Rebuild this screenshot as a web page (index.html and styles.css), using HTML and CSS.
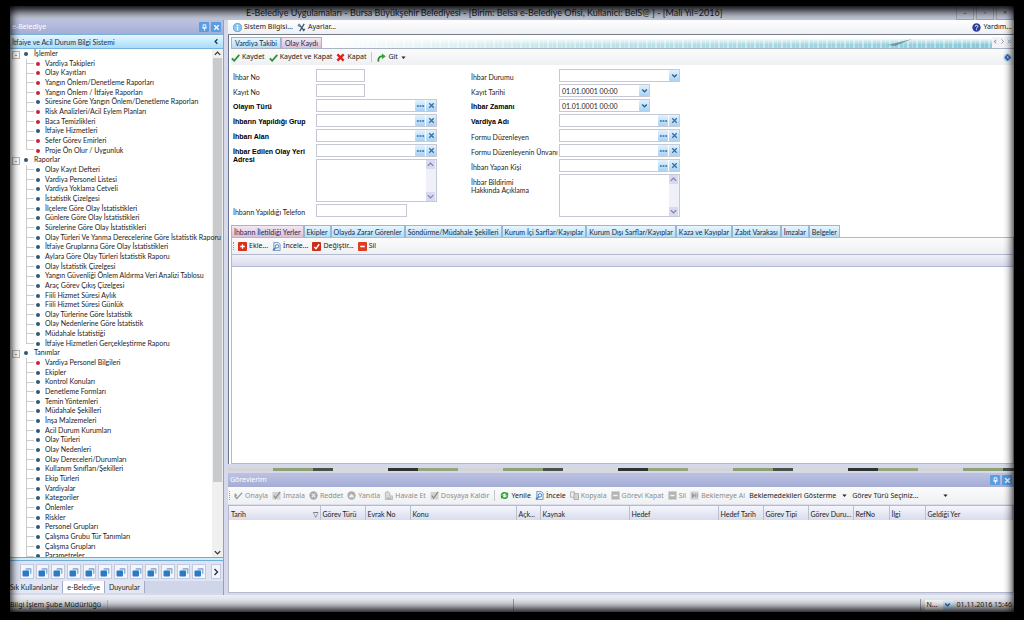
FILE: index.html
```html
<!DOCTYPE html>
<html lang="tr">
<head>
<meta charset="utf-8">
<title>E-Belediye Uygulamaları</title>
<link rel="stylesheet" href="styles.css">
</head>
<body>
<svg class="defs" aria-hidden="true">
  <symbol id="check" viewBox="0 0 10 10"><path d="M1 6l2.500 2.600L9.200 2" fill="none" stroke="#2f9136" stroke-width="2"/></symbol>
  <symbol id="cross" viewBox="0 0 10 10"><path d="M1.500 1.500l7 7M8.500 1.500l-7 7" stroke="#d8231f" stroke-width="2.600"/></symbol>
  <symbol id="go" viewBox="0 0 10 10"><path d="M1.500 9.500C1 5.500 3 3.500 6 3.500" fill="none" stroke="#268a2c" stroke-width="2"/><path d="M5.500 .5L9.800 3.700L5.500 7z" fill="#35a53a"/></symbol>
  <symbol id="info" viewBox="0 0 10 10"><circle cx="5" cy="5" r="4.500" fill="#8cc8ee" stroke="#5a9fd0"/><path d="M5 2v1.300M5 4.200v4" stroke="#fff" stroke-width="1.500"/></symbol>
  <symbol id="tools" viewBox="0 0 10 10"><path d="M2 1l6 8M8 1L3 9M1 2l2 2M6 7h3" stroke="#3f5470" stroke-width="1.400"/><circle cx="2.500" cy="2.500" r="1.500" fill="#7890b0"/></symbol>
  <symbol id="help" viewBox="0 0 10 10"><circle cx="5" cy="5" r="4.600" fill="#2b3b9c"/><path d="M3.500 4c0-2 3-2 3 0c0 1-1.500 1-1.500 2.200M5 7v1" fill="none" stroke="#fff" stroke-width="1.100"/></symbol>
  <symbol id="add" viewBox="0 0 10 10"><rect width="10" height="10" rx="1" fill="#dc3018"/><path d="M5 2.500v5M2.500 5h5" stroke="#fff" stroke-width="1.500"/></symbol>
  <symbol id="edit" viewBox="0 0 10 10"><rect width="10" height="10" rx="1" fill="#cc2e1a"/><path d="M2.500 5.500l2 2L8 2.500" fill="none" stroke="#fff" stroke-width="1.500"/></symbol>
  <symbol id="del" viewBox="0 0 10 10"><rect width="10" height="10" rx="1" fill="#e03a20"/><path d="M2.500 5h5" stroke="#fff" stroke-width="1.700"/></symbol>
  <symbol id="view" viewBox="0 0 10 10"><path d="M2 .5h5l2 2v7H2z" fill="#e4effb" stroke="#6d93c2"/><circle cx="5.500" cy="4.800" r="1.900" fill="#fff" stroke="#3f73b5"/><path d="M4 6.300L1 9.300" stroke="#3f73b5" stroke-width="1.500"/></symbol>
  <symbol id="gcheck" viewBox="0 0 10 10"><path d="M.5 5l2.500 3.500L9 2M1 3l2 2.500" fill="none" stroke="#a0a0a0" stroke-width="1.600"/></symbol>
  <symbol id="gsign" viewBox="0 0 10 10"><rect x=".5" y="1" width="9" height="8.500" fill="#d2d2d2"/><path d="M2 5l2 3L9 1" fill="none" stroke="#8e8e8e" stroke-width="1.400"/></symbol>
  <symbol id="gring" viewBox="0 0 10 10"><circle cx="5" cy="5" r="4.600" fill="#a8a8a8"/><path d="M3 3l4 4M7 3L3 7" stroke="#eee" stroke-width="1.300"/></symbol>
  <symbol id="gwait" viewBox="0 0 10 10"><rect x=".5" y=".5" width="9" height="9" fill="#d2d2d2"/><path d="M2.500 2.500v5l2.500-2.500zM6 3v4M8 3v4" fill="#999" stroke="#999"/></symbol>
  <symbol id="gback" viewBox="0 0 10 10"><circle cx="5" cy="5" r="4.600" fill="#adadad"/><path d="M2.500 5.500L5 3l2.500 2.500v1.800h-5z" fill="#eee"/></symbol>
  <symbol id="gdoc" viewBox="0 0 10 10"><path d="M1.500 9.500V1.500l3-1l2 2v3h3v4z" fill="#d8d8d8" stroke="#b8b8b8"/><path d="M3 8h5" stroke="#999"/></symbol>
  <symbol id="gcopy" viewBox="0 0 10 10"><path d="M.5 1h4.500v6H.5z" fill="#eee" stroke="#aaa"/><path d="M4.500 3h5v6.500h-5z" fill="#e2e2e2" stroke="#a2a2a2"/><path d="M5.500 5.500h3M5.500 7.500h3" stroke="#aaa" stroke-width=".7"/></symbol>
  <symbol id="gbox" viewBox="0 0 10 10"><rect x=".5" y=".5" width="9" height="9" fill="#b4b4b4"/><path d="M2.500 5h5" stroke="#f2f2f2" stroke-width="1.600"/></symbol>
  <symbol id="refresh" viewBox="0 0 10 10"><path d="M1.500 5a3.500 3.500 0 0 1 6-2M8.500 5a3.500 3.500 0 0 1-6 2" fill="none" stroke="#2fa53a" stroke-width="1.800"/><path d="M9 1v4H5.500zM1 9V5h3.500z" fill="#2c9a36"/></symbol>
  <symbol id="cubes" viewBox="0 0 10 10"><rect x="3.500" y="1" width="6" height="6" rx="1" fill="#8db6e0"/><path d="M3 3.200h4.500v4.600" fill="none" stroke="#fff" stroke-width=".8"/><rect x=".5" y="3.500" width="6.500" height="6" rx="1" fill="#2e7ac2"/></symbol>
  <symbol id="pin" viewBox="0 0 10 10"><path d="M3.500 2h3v3.500h-3zM2.500 5.500h5M5 5.500v3" fill="none" stroke="#fff"/></symbol>
  <symbol id="close" viewBox="0 0 10 10"><path d="M2.500 2.500l5 5M7.500 2.500l-5 5" stroke="#fff" stroke-width="1.400"/></symbol>
  <symbol id="x" viewBox="0 0 10 10"><path d="M2.500 2.500l5 5M7.500 2.500l-5 5" stroke="#2f6aa5" stroke-width="1.300"/></symbol>
  <symbol id="dots" viewBox="0 0 10 10"><path d="M1 5.500h2M4 5.500h2M7 5.500h2" stroke="#2f6aa5" stroke-width="1.500"/></symbol>
  <symbol id="down" viewBox="0 0 10 10"><path d="M2.500 3.800L5 6.500l2.500-2.700" fill="none" stroke="#235b93" stroke-width="1.500"/></symbol>
  <symbol id="cup" viewBox="0 0 10 10"><path d="M2 6.500L5 3.500l3 3" fill="none" stroke="currentColor" stroke-width="1.400"/></symbol>
  <symbol id="cdown" viewBox="0 0 10 10"><path d="M2 3.500L5 6.500l3-3" fill="none" stroke="currentColor" stroke-width="1.400"/></symbol>
  <symbol id="cleft" viewBox="0 0 10 10"><path d="M6 2.500L3.500 5l2.500 2.500" fill="none" stroke="#123a66" stroke-width="1.500"/></symbol>
  <symbol id="cright" viewBox="0 0 10 10"><path d="M3.500 2l3 3l-3 3" fill="none" stroke="#28324c" stroke-width="1.400"/></symbol>
  <symbol id="caret" viewBox="0 0 10 10"><path d="M2 3.500h6L5 7z" fill="#222"/></symbol>
  <symbol id="gem" viewBox="0 0 10 10"><circle cx="5" cy="5" r="4.500" fill="#b9d6f2"/><path d="M5 1L9 5L5 9L1.500 5z" fill="#2b63b4"/><path d="M4 4h2v3z" fill="#e8f3ff"/></symbol>
</svg>

<div class="app">
  <header class="titlebar">
    <h1>E-Belediye Uygulamaları - Bursa Büyükşehir Belediyesi - [Birim: Belsa e-Belediye Ofisi, Kullanici: BelS@ ] - [Mali Yıl=2016]</h1>
    <div class="winbtns"><button aria-label="Küçült">–</button><button aria-label="Büyüt">▫</button><button aria-label="Kapat">×</button></div>
  </header>

  <div class="work">
    <aside class="side">
      <div class="cap"><span>e-Belediye</span><button class="capbtn" aria-label="Sabitle"><svg><use href="#pin"/></svg></button><button class="capbtn" aria-label="Kapat"><svg><use href="#close"/></svg></button></div>
      <div class="group"><span>İtfaiye ve Acil Durum Bilgi Sistemi</span><button aria-label="Daralt"><svg><use href="#cleft"/></svg></button></div>
      <div class="treebox">
        <ul class="tree">
          <li class="root">İşlemler</li>
          <li class="red">Vardiya Takipleri</li>
          <li class="red">Olay Kayıtları</li>
          <li class="red">Yangın Önlem/Denetleme Raporları</li>
          <li class="red">Yangın Önlem / İtfaiye Raporları</li>
          <li>Süresine Göre Yangın Önlem/Denetleme Raporları</li>
          <li class="red">Risk Analizleri/Acil Eylem Planları</li>
          <li class="red">Baca Temizlikleri</li>
          <li>İtfaiye Hizmetleri</li>
          <li class="red">Sefer Görev Emirleri</li>
          <li class="red last">Proje Ön Olur / Uygunluk</li>
          <li class="root">Raporlar</li>
          <li>Olay Kayıt Defteri</li>
          <li>Vardiya Personel Listesi</li>
          <li>Vardiya Yoklama Cetveli</li>
          <li>İstatistik Çizelgesi</li>
          <li>İlçelere Göre Olay İstatistikleri</li>
          <li>Günlere Göre Olay İstatistikleri</li>
          <li>Sürelerine Göre Olay İstatistikleri</li>
          <li>Olay Türleri Ve Yanma Derecelerine Göre İstatistik Raporu</li>
          <li>İtfaiye Gruplarına Göre Olay İstatistikleri</li>
          <li>Aylara Göre Olay Türleri İstatistik Raporu</li>
          <li>Olay İstatistik Çizelgesi</li>
          <li>Yangın Güvenliği Önlem Aldırma Veri Analizi Tablosu</li>
          <li>Araç Görev Çıkış Çizelgesi</li>
          <li>Fiili Hizmet Süresi Aylık</li>
          <li>Fiili Hizmet Süresi Günlük</li>
          <li>Olay Türlerine Göre İstatistik</li>
          <li>Olay Nedenlerine Göre İstatistik</li>
          <li>Müdahale İstatistiği</li>
          <li class="last">İtfaiye Hizmetleri Gerçekleştirme Raporu</li>
          <li class="root">Tanımlar</li>
          <li class="red">Vardiya Personel Bilgileri</li>
          <li>Ekipler</li>
          <li>Kontrol Konuları</li>
          <li>Denetleme Formları</li>
          <li>Temin Yöntemleri</li>
          <li>Müdahale Şekilleri</li>
          <li>İnşa Malzemeleri</li>
          <li>Acil Durum Kurumları</li>
          <li>Olay Türleri</li>
          <li>Olay Nedenleri</li>
          <li>Olay Dereceleri/Durumları</li>
          <li>Kullanım Sınıfları/Şekilleri</li>
          <li>Ekip Türleri</li>
          <li>Vardiyalar</li>
          <li>Kategoriler</li>
          <li>Önlemler</li>
          <li>Riskler</li>
          <li>Personel Grupları</li>
          <li>Çalışma Grubu Tür Tanımları</li>
          <li>Çalışma Grupları</li>
          <li>Parametreler</li>
        </ul>
        <div class="scroll"><svg><use href="#cup"/></svg><i class="thumb"></i><i class="rest"></i><svg><use href="#cdown"/></svg></div>
      </div>
      <div class="split"></div>
      <div class="quick">
        <button aria-label="Modül 1"><svg><use href="#cubes"/></svg></button><button aria-label="Modül 2"><svg><use href="#cubes"/></svg></button><button aria-label="Modül 3"><svg><use href="#cubes"/></svg></button><button aria-label="Modül 4"><svg><use href="#cubes"/></svg></button><button aria-label="Modül 5"><svg><use href="#cubes"/></svg></button><button aria-label="Modül 6"><svg><use href="#cubes"/></svg></button><button aria-label="Modül 7"><svg><use href="#cubes"/></svg></button><button aria-label="Modül 8"><svg><use href="#cubes"/></svg></button><button aria-label="Modül 9"><svg><use href="#cubes"/></svg></button><button aria-label="Modül 10"><svg><use href="#cubes"/></svg></button><button aria-label="Modül 11"><svg><use href="#cubes"/></svg></button><button aria-label="Modül 12"><svg><use href="#cubes"/></svg></button><button class="more" aria-label="Diğer"><svg><use href="#cright"/></svg></button>
      </div>
      <nav class="sidetabs"><button>Sık Kullanılanlar</button><button class="on">e-Belediye</button><button>Duyurular</button></nav>
    </aside>

    <main class="main">
      <div class="menubar"><button><svg><use href="#info"/></svg>Sistem Bilgisi...</button><button><svg><use href="#tools"/></svg>Ayarlar...</button><button class="end"><svg><use href="#help"/></svg>Yardım...</button></div>
      <section class="doc">
        <nav class="doctabs"><button>Vardiya Takibi</button><button class="on">Olay Kaydı</button><div class="skyline"><svg viewBox="0 0 24 10" aria-hidden="true"><path d="M0 8l24-6l-17 7z" fill="#71979b"/></svg></div><span class="tabnav"><svg><use href="#cleft"/></svg><svg><use href="#cright"/></svg><svg><use href="#x"/></svg></span></nav>
        <div class="bar"><button><svg><use href="#check"/></svg>Kaydet</button><button><svg><use href="#check"/></svg>Kaydet ve Kapat</button><button><svg><use href="#cross"/></svg>Kapat</button><i class="sep"></i><button><svg><use href="#go"/></svg>Git<svg class="caret"><use href="#caret"/></svg></button><button class="end" aria-label="Görünüm"><svg><use href="#gem"/></svg></button></div>

        <form class="form">
          <div class="col left">
            <label for="f1">İhbar No</label><input id="f1" class="short">
            <label for="f2">Kayıt No</label><input id="f2" class="short">
            <label class="b" for="f3">Olayın Türü</label><div class="pick"><input id="f3"><button type="button" aria-label="Seç"><svg><use href="#dots"/></svg></button><button type="button" aria-label="Temizle"><svg><use href="#x"/></svg></button></div>
            <label class="b" for="f4">İhbarın Yapıldığı Grup</label><div class="pick"><input id="f4"><button type="button" aria-label="Seç"><svg><use href="#dots"/></svg></button><button type="button" aria-label="Temizle"><svg><use href="#x"/></svg></button></div>
            <label class="b" for="f5">İhbarı Alan</label><div class="pick"><input id="f5"><button type="button" aria-label="Seç"><svg><use href="#dots"/></svg></button><button type="button" aria-label="Temizle"><svg><use href="#x"/></svg></button></div>
            <label class="b tall" for="f6">İhbar Edilen Olay Yeri Adresi</label><div class="pick"><input id="f6"><button type="button" aria-label="Seç"><svg><use href="#dots"/></svg></button><button type="button" aria-label="Temizle"><svg><use href="#x"/></svg></button></div>
            <div class="area"><textarea aria-label="Adres açıklaması"></textarea><span><svg><use href="#cup"/></svg><svg><use href="#cdown"/></svg></span></div>
            <label for="f7">İhbarın Yapıldığı Telefon</label><input id="f7" class="mid">
          </div>
          <div class="col right">
            <label for="g1">İhbar Durumu</label><div class="pick"><select id="g1"><option></option></select><span class="arrow"><svg><use href="#down"/></svg></span></div>
            <label for="g2">Kayıt Tarihi</label><div class="pick date"><input id="g2" value="01.01.0001 00:00"><button type="button" aria-label="Takvim"><svg><use href="#down"/></svg></button></div>
            <label class="b" for="g3">İhbar Zamanı</label><div class="pick date"><input id="g3" value="01.01.0001 00:00"><button type="button" aria-label="Takvim"><svg><use href="#down"/></svg></button></div>
            <label class="b" for="g4">Vardiya Adı</label><div class="pick"><input id="g4"><button type="button" aria-label="Seç"><svg><use href="#dots"/></svg></button><button type="button" aria-label="Temizle"><svg><use href="#x"/></svg></button></div>
            <label for="g5">Formu Düzenleyen</label><div class="pick"><input id="g5"><button type="button" aria-label="Seç"><svg><use href="#dots"/></svg></button><button type="button" aria-label="Temizle"><svg><use href="#x"/></svg></button></div>
            <label for="g6">Formu Düzenleyenin Ünvanı</label><div class="pick"><input id="g6"><button type="button" aria-label="Seç"><svg><use href="#dots"/></svg></button><button type="button" aria-label="Temizle"><svg><use href="#x"/></svg></button></div>
            <label for="g7">İhbarı Yapan Kişi</label><div class="pick"><input id="g7"><button type="button" aria-label="Seç"><svg><use href="#dots"/></svg></button><button type="button" aria-label="Temizle"><svg><use href="#x"/></svg></button></div>
            <label class="multi" for="g8">İhbar Bildirimi<br>Hakkında Açıklama</label><div class="area"><textarea id="g8"></textarea><span><svg><use href="#cup"/></svg><svg><use href="#cdown"/></svg></span></div>
          </div>
        </form>

        <nav class="subtabs"><button class="on">İhbarın İletildiği Yerler</button><button>Ekipler</button><button>Olayda Zarar Görenler</button><button>Söndürme/Müdahale Şekilleri</button><button>Kurum İçi Sarflar/Kayıplar</button><button>Kurum Dışı Sarflar/Kayıplar</button><button>Kaza ve Kayıplar</button><button>Zabıt Varakası</button><button>İmzalar</button><button>Belgeler</button></nav>
        <div class="pane">
          <div class="bar sub"><i class="grip"></i><button><svg><use href="#add"/></svg>Ekle...</button><button><svg><use href="#view"/></svg>İncele...</button><button><svg><use href="#edit"/></svg>Değiştir...</button><button><svg><use href="#del"/></svg>Sil</button></div>
          <div class="gridhead"></div>
        </div>
      </section>
      <div class="photo"></div>
      <section class="tasks">
        <div class="cap"><span>Görevlerim</span><button class="capbtn" aria-label="Sabitle"><svg><use href="#pin"/></svg></button><button class="capbtn" aria-label="Kapat"><svg><use href="#close"/></svg></button></div>
        <div class="bar taskbar"><i class="grip"></i><button disabled><svg><use href="#gcheck"/></svg>Onayla</button><button disabled><svg><use href="#gsign"/></svg>İmzala</button><button disabled><svg><use href="#gring"/></svg>Reddet</button><button disabled><svg><use href="#gback"/></svg>Yanıtla</button><button disabled><svg><use href="#gdoc"/></svg>Havale Et</button><button disabled><svg><use href="#gsign"/></svg>Dosyaya Kaldır</button><i class="sep"></i><button><svg><use href="#refresh"/></svg>Yenile</button><button><svg><use href="#view"/></svg>İncele</button><button disabled><svg><use href="#gcopy"/></svg>Kopyala</button><button disabled><svg><use href="#gbox"/></svg>Görevi Kapat</button><button disabled><svg><use href="#gbox"/></svg>Sil</button><button disabled><svg><use href="#gwait"/></svg>Beklemeye Al</button><button class="drop">Beklemedekileri Gösterme<svg class="caret"><use href="#caret"/></svg></button><button class="drop wide">Görev Türü Seçiniz...<svg class="caret"><use href="#caret"/></svg></button></div>
        <div class="tablebox">
          <table>
            <colgroup><col class="w91"><col class="w45"><col class="w45"><col class="w106"><col class="w24"><col class="w89"><col class="w89"><col class="w45"><col class="w45"><col class="w45"><col class="w36"><col class="w36"><col></colgroup>
            <thead><tr><th>Tarih<span>▽</span></th><th>Görev Türü</th><th>Evrak No</th><th>Konu</th><th>Açk...</th><th>Kaynak</th><th>Hedef</th><th>Hedef Tarih</th><th>Görev Tipi</th><th>Görev Duru...</th><th>RefNo</th><th>İlgi</th><th>Geldiği Yer</th></tr></thead>
          </table>
        </div>
      </section>
    </main>
  </div>

  <footer class="status"><span class="dept">Bilgi İşlem Şube Müdürlüğü</span><span class="cell"></span><span class="cell"></span><div class="state"><span>N...</span><span class="arrow"><svg><use href="#down"/></svg></span></div><time>01.11.2016 15:46</time></footer>
  <div class="vignette"></div>
</div>
</body>
</html>
```
FILE: styles.css
```css
:root { --compact: Lato, "Liberation Sans", sans-serif; }
* { box-sizing: border-box; }
body { margin: 0; background: #000; color: #222; font: 7px/10px "Noto Sans", "Open Sans", sans-serif; }
.defs { display: none; }
button, input, select, textarea { font: inherit; color: inherit; margin: 0; padding: 0; border: 0; background: none; outline: 0; }
button { display: inline-flex; align-items: center; white-space: nowrap; }
svg { flex: none; width: 9px; height: 9px; }
.app { position: relative; height: 100vh; display: flex; flex-direction: column; padding: 5px 10px 8px; overflow: hidden; background: #000; }
.vignette { position: absolute; inset: 0; pointer-events: none; border: 6px solid #000; box-shadow: inset 0 0 10px 5px #000; }

.titlebar { display: flex; height: 15px; padding-left: 236px; background: #c3c8d8; }
.titlebar h1 { flex: 1; min-width: 0; margin: 0; font: 400 9px/15px var(--compact); white-space: nowrap; }
.winbtns { display: flex; gap: 2px; }
.winbtns button { width: 18px; justify-content: center; border: 1px solid #a0a5b5; color: #555; }

.work { flex: 1; min-height: 0; display: flex; gap: 4px; background: #d5d9ea; }
.side { width: 214px; display: flex; flex-direction: column; padding-bottom: 2px; border-right: 1px solid #8da0c8; }
.cap { display: flex; align-items: center; gap: 2px; height: 14px; padding: 0 2px; color: #fff; background: linear-gradient(#bcc2e2, #a5add5); }
.cap > span { flex: 1; }
.capbtn { width: 10px; height: 10px; justify-content: center; background: #5a9de0; border-radius: 1px; }
.group { display: flex; align-items: center; height: 15px; padding: 0 2px; border: 1px solid #78b1dc; border-width: 1px 0; background: linear-gradient(#e6f7ff, #a9dcf8); color: #13304f; font: 7px/10px var(--compact); }
.group > span { flex: 1; }

.treebox { flex: 1; min-height: 0; display: flex; overflow: hidden; background: #fff; }
.tree { flex: 1; min-width: 0; margin: 0 0 -4px; padding: 0; list-style: none; display: grid; grid-auto-rows: 1fr; font: 7px/9px var(--compact); white-space: nowrap; }
.tree li { position: relative; min-height: 0; padding-left: 35px; }
.tree li::before { content: ""; position: absolute; left: 16px; top: 0; bottom: 0; width: 7px; border-left: 1px solid #ccc; background: linear-gradient(#ccc, #ccc) 0 50% / 100% 1px no-repeat; }
.tree li.last::before { bottom: 50%; background-position: 0 100%; }
.tree li::after { content: ""; position: absolute; left: 26px; top: 3px; width: 4px; height: 4px; border-radius: 50%; background: #2c5878; }
.tree li.red::after { background: #cc2038; }
.tree li.root { padding-left: 24px; }
.tree li.root::before { left: 2px; top: 2px; bottom: auto; width: 6px; height: 6px; border: 1px solid #bbb; background: linear-gradient(#999, #999) 50% 50% / 2px 1px no-repeat; }
.tree li.root::after { left: 14px; }
.scroll { flex: none; width: 11px; display: flex; flex-direction: column; align-items: center; background: #f0f0f0; color: #333; }
.thumb { flex: 425; width: 9px; background: #c9cacc; }
.rest { flex: 66; }
.split { height: 4px; border: 1px solid #6fadd8; border-width: 1px 0; background: #d3ecfa; }
.quick { display: flex; gap: 2px; height: 20px; padding: 3px 2px 2px 10px; background: #dfe4f3; }
.quick button { flex: 1; justify-content: center; border: 1px solid #c3cae0; background: #f3f5fb; }
.quick svg { width: 10px; height: 10px; }
.quick .more { flex: none; width: 10px; margin-left: 3px; }
.sidetabs { display: flex; height: 12px; background: #d0d6ea; font: 7px/10px var(--compact); }
.sidetabs button { padding: 0 4px; border-right: 1px solid #a3abc8; background: #e3e7f3; }
.sidetabs button:first-child { padding-left: 0; }
.sidetabs .on { background: #fff; }

.main { flex: 1; min-width: 0; display: flex; flex-direction: column; }
.menubar { display: flex; gap: 4px; height: 15px; padding: 0 2px 0 5px; background: linear-gradient(#fff, #eef0f4); border-bottom: 1px solid #777d88; }
.menubar svg, .bar svg { margin-right: 2px; }
.end { margin-left: auto; }
.doc { flex: 1; min-height: 0; display: flex; flex-direction: column; padding: 2px 0 0 2px; background: #fff; border-left: 1px solid #6b7390; }
.doctabs { display: flex; height: 12px; border-bottom: 1px solid #a9b3c4; }
.doctabs button, .subtabs button { padding: 0 3px; border: 1px solid #95b8d8; border-bottom: 0; background: linear-gradient(#eaf6fe, #b5dcf4); color: #132c48; font: 7px/10px var(--compact); }
.doctabs .on, .subtabs .on { background: linear-gradient(#f4e8f3, #dcbedb); border-color: #c2a6c4; }
.skyline { flex: 1; display: flex; justify-content: flex-end; padding-right: 80px; background: linear-gradient(#fff 10%, transparent 70%), repeating-linear-gradient(90deg, #ffffff66 0 2px, transparent 2px 5px, #ffffff44 5px 6px, transparent 6px 9px), linear-gradient(90deg, #fff, #c4e6ea 35%, #86cadb); }
.skyline svg { width: 24px; height: 10px; }
.tabnav { display: flex; width: 22px; background: #e6e6f0; opacity: .5; }
.tabnav svg { width: 7px; }
.bar { display: flex; gap: 4px; height: 16px; background: linear-gradient(#fbfbfb, #eef0f3); }
.bar .caret { width: 7px; height: 7px; margin: 0 0 0 2px; }
.bar button:disabled { color: #8d8d8d; }
.sep { width: 1px; margin: 3px 1px; background: #c6c8ce; }
.grip { width: 1px; margin: 4px 0 4px 1px; border-left: 1px dotted #999; }

.form { display: flex; gap: 34px; padding: 4px 2px 0; font: 7px/10px var(--compact); }
.col { display: grid; gap: 2px 0; grid-auto-rows: 13px; align-content: start; }
.left { grid-template-columns: 83px 121px; }
.right { grid-template-columns: 88px 121px; }
.form label { line-height: 8px; padding-top: 4px; white-space: nowrap; }
.form label.b { font-family: "Liberation Sans", Arial, sans-serif; font-weight: 700; color: #000; }
.form label.tall { white-space: normal; grid-row: span 4; }
.form label.multi { grid-row: span 3; }
.form input.short, .form input.mid, .pick, .area { border: 1px solid #c6c8d6; background: #fff; }
.form input.short { width: 49px; }
.form input.mid { width: 91px; }
.pick { display: flex; gap: 1px; }
.pick input, .pick select { flex: 1; min-width: 0; appearance: none; padding: 0 2px; }
.pick button, .arrow { flex: none; display: flex; align-items: center; justify-content: center; width: 10px; background: linear-gradient(#e2f2fd, #a9d2f3); border-radius: 1px; }
.date { width: 91px; }
.area { display: flex; grid-row: span 3; }
.area textarea { flex: 1; min-width: 0; resize: none; }
.area span { width: 10px; display: flex; flex-direction: column; justify-content: space-between; background: #f0f1f8; color: #7d83b0; }
.area svg { background: #d9daf0; }

.subtabs { display: flex; height: 12px; margin-top: 8px; }
.subtabs button { padding: 0 2px; }
.pane { flex: 1; min-height: 0; border: 1px solid #b2b7ca; background: #fff; }
.gridhead { height: 13px; border: 1px solid #b4b9d0; border-width: 1px 0; background: linear-gradient(#f0f1fa, #d9dcec); }
.photo { height: 9px; border: solid #d4d8e8; border-width: 4px 0 2px; background: repeating-linear-gradient(90deg, #d4d4d4 0 45px, #8fa075 45px 85px, #4a5248 85px 105px, #d8dadc 105px 160px, #2f3330 160px 190px, #97a57e 190px 230px); }
.tasks { display: flex; flex-direction: column; height: 122px; padding-bottom: 2px; }
.taskbar { height: 18px; border-bottom: 1px solid #dde; }
.bar .drop .caret { margin-left: 5px; }
.bar .drop.wide .caret { margin-left: 24px; }
.tablebox { flex: 1; border: 1px solid #b4b9d0; background: #fff; }
table { width: 100%; table-layout: fixed; border-collapse: collapse; font: 7px/10px var(--compact); }
th { height: 14px; padding: 2px 2px 0; font-weight: 400; text-align: left; white-space: nowrap; overflow: hidden; border-right: 1px solid #b9bed2; background: linear-gradient(#f5f6fc, #d9dcec); }
th span { float: right; }
.w91 { width: 91px; } .w45 { width: 45px; } .w106 { width: 106px; } .w24 { width: 24px; } .w89 { width: 89px; } .w36 { width: 36px; }

.status { display: flex; align-items: center; height: 17px; padding-top: 2px; background: linear-gradient(#eceef4, #c8cad2); }
.dept { width: 98px; border-right: 1px solid #bbb; }
.cell { flex: 1; height: 12px; border-right: 1px solid #999; }
.state { display: flex; justify-content: space-between; width: 28px; margin: 0 4px; padding-left: 2px; background: #f5f6fa; }
.status time { padding-right: 2px; }
```
